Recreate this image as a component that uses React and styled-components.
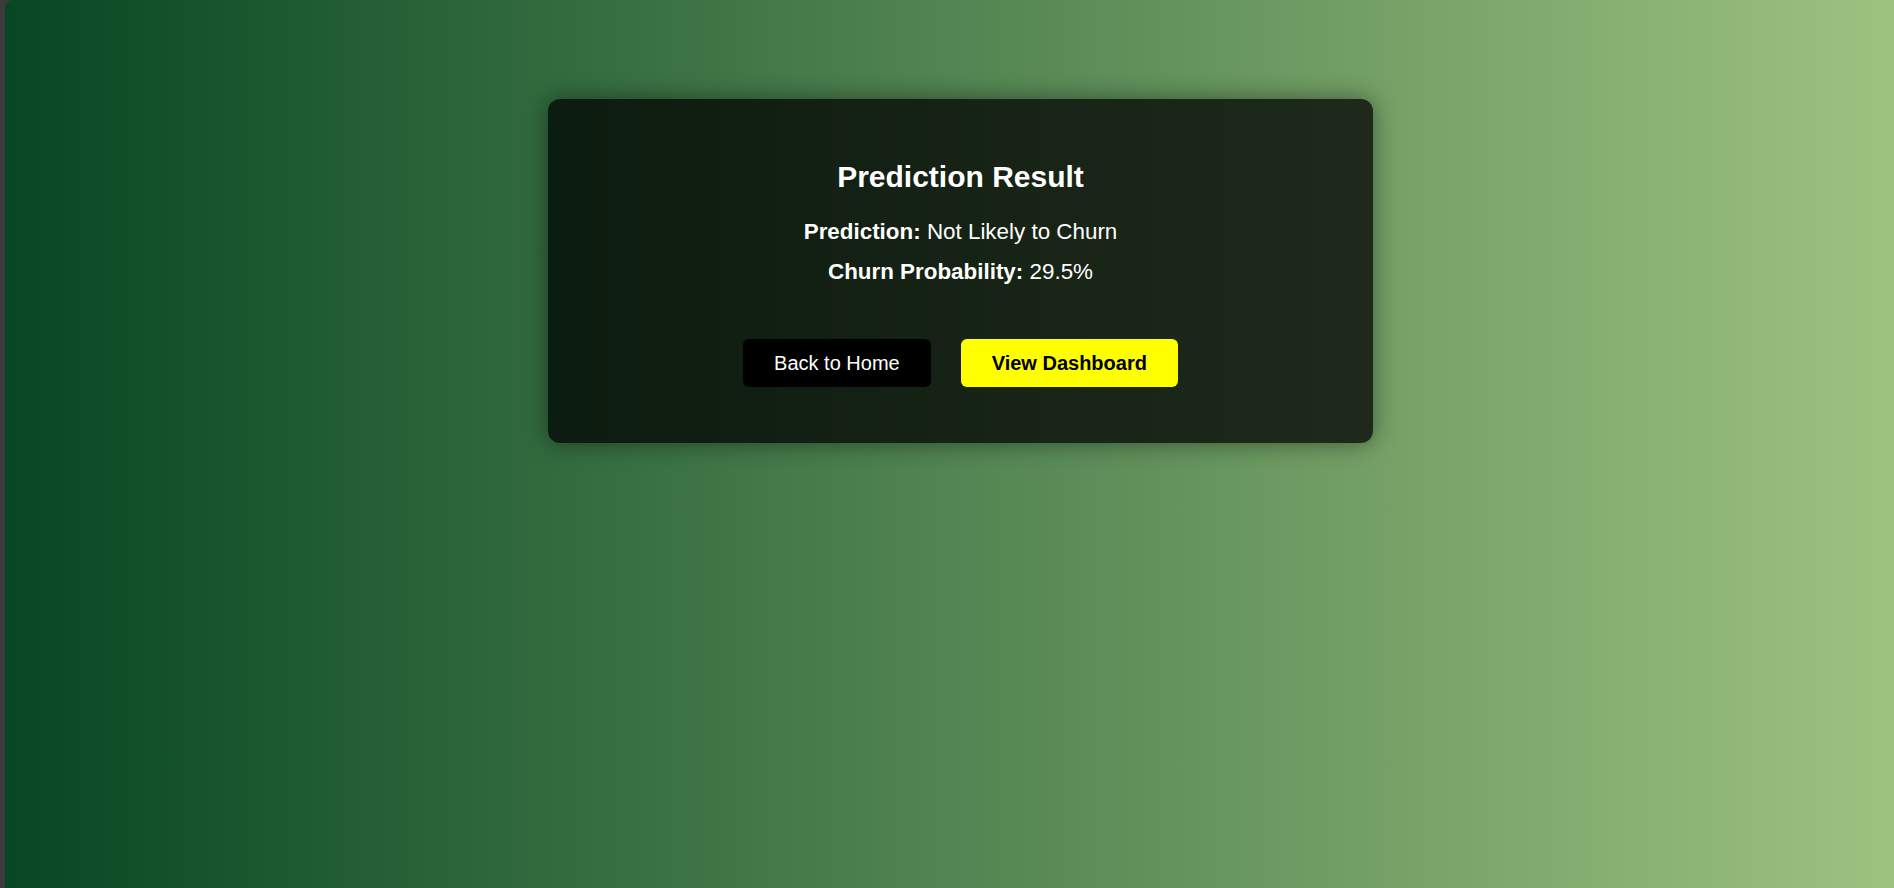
import React from 'react';
import styled, { createGlobalStyle } from 'styled-components';

const GlobalStyle = createGlobalStyle`
  html, body {
    margin: 0;
    padding: 0;
    height: 100%;
    overflow: hidden;
    background: #3b3b3b;
    font-family: "Liberation Sans", Arial, sans-serif;
  }
`;

const Page = styled.div`
  margin-left: 5px;
  height: 100vh;
  border-top-left-radius: 8px;
  background: linear-gradient(to right, #074723, #9dc280);
  display: flex;
  flex-direction: column;
  align-items: flex-start;
`;

const Card = styled.div`
  width: 825px;
  box-sizing: border-box;
  margin: 99px 0 0 543px;
  padding: 50px 0 56px;
  border-radius: 12px;
  background: rgba(0, 0, 0, 0.74);
  box-shadow: 0 0 24px rgba(0, 0, 0, 0.45);
  color: #fff;
  text-align: center;
`;

const Title = styled.h2`
  margin: 10px 0 25px;
  font-size: 30px;
  line-height: 35px;
  font-weight: 700;
`;

const Line = styled.p`
  margin: 0 0 14px;
  font-size: 22.4px;
  line-height: 26px;

  strong {
    font-weight: 700;
  }
`;

const Actions = styled.div`
  display: flex;
  justify-content: center;
  gap: 30px;
  margin-top: 54px;
`;

const Button = styled.button`
  border: none;
  border-radius: 6px;
  padding: 12px 31px;
  font-family: inherit;
  font-size: 20px;
  line-height: 24px;
  cursor: pointer;
  background: ${(p) => (p.$primary ? '#ffff00' : '#000')};
  color: ${(p) => (p.$primary ? '#000' : '#fff')};
  font-weight: ${(p) => (p.$primary ? 700 : 400)};
`;

const App = () => (
  <>
    <GlobalStyle />
    <Page>
      <Card>
        <Title>Prediction Result</Title>
        <Line><strong>Prediction:</strong> Not Likely to Churn</Line>
        <Line><strong>Churn Probability:</strong> 29.5%</Line>
        <Actions>
          <Button>Back to Home</Button>
          <Button $primary>View Dashboard</Button>
        </Actions>
      </Card>
    </Page>
  </>
);

export default App;
